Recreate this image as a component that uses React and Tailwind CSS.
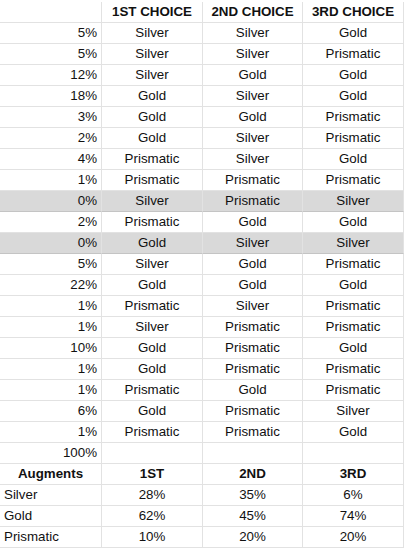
import React from 'react';

const rows = [
  ['5%', 'Silver', 'Silver', 'Gold'],
  ['5%', 'Silver', 'Silver', 'Prismatic'],
  ['12%', 'Silver', 'Gold', 'Gold'],
  ['18%', 'Gold', 'Silver', 'Gold'],
  ['3%', 'Gold', 'Gold', 'Prismatic'],
  ['2%', 'Gold', 'Silver', 'Prismatic'],
  ['4%', 'Prismatic', 'Silver', 'Gold'],
  ['1%', 'Prismatic', 'Prismatic', 'Prismatic'],
  ['0%', 'Silver', 'Prismatic', 'Silver', true],
  ['2%', 'Prismatic', 'Gold', 'Gold'],
  ['0%', 'Gold', 'Silver', 'Silver', true],
  ['5%', 'Silver', 'Gold', 'Prismatic'],
  ['22%', 'Gold', 'Gold', 'Gold'],
  ['1%', 'Prismatic', 'Silver', 'Prismatic'],
  ['1%', 'Silver', 'Prismatic', 'Prismatic'],
  ['10%', 'Gold', 'Prismatic', 'Gold'],
  ['1%', 'Gold', 'Prismatic', 'Prismatic'],
  ['1%', 'Prismatic', 'Gold', 'Prismatic'],
  ['6%', 'Gold', 'Prismatic', 'Silver'],
  ['1%', 'Prismatic', 'Prismatic', 'Gold'],
];

const summary = [
  ['Silver', '28%', '35%', '6%'],
  ['Gold', '62%', '45%', '74%'],
  ['Prismatic', '10%', '20%', '20%'],
];

const cell = 'h-[21px] flex items-center border-r border-b border-[#e2e2e2] leading-none';

function Row({ cells, gray, bold, firstAlign = 'right' }) {
  const bg = gray ? 'bg-[#d9d9d9] border-b-[#c4c4c4]' : '';
  return (
    <>
      {cells.map((c, i) => {
        let align = 'justify-center';
        if (i === 0) {
          if (firstAlign === 'right') align = 'justify-end pr-[4px]';
          else if (firstAlign === 'left') align = 'justify-start pl-[4px]';
        }
        return (
          <div key={i} className={`${cell} ${align} ${bg} ${bold ? 'font-bold' : ''}`}>
            {c}
          </div>
        );
      })}
    </>
  );
}

export default function App() {
  return (
    <div className="w-[405px] h-[549px] bg-white overflow-hidden text-[13.33px] text-[#111]" style={{ fontFamily: '"Liberation Sans", Arial, sans-serif' }}>
      <div className="grid grid-cols-[102px_101px_100px_101px] pt-[2px]">
        <Row cells={['', '1ST CHOICE', '2ND CHOICE', '3RD CHOICE']} bold />
        {rows.map((r, i) => (
          <Row key={i} cells={r.slice(0, 4)} gray={r[4]} />
        ))}
        <Row cells={['100%', '', '', '']} />
        <Row cells={['Augments', '1ST', '2ND', '3RD']} bold firstAlign="center" />
        {summary.map((r, i) => (
          <Row key={i} cells={r} firstAlign="left" />
        ))}
      </div>
    </div>
  );
}
